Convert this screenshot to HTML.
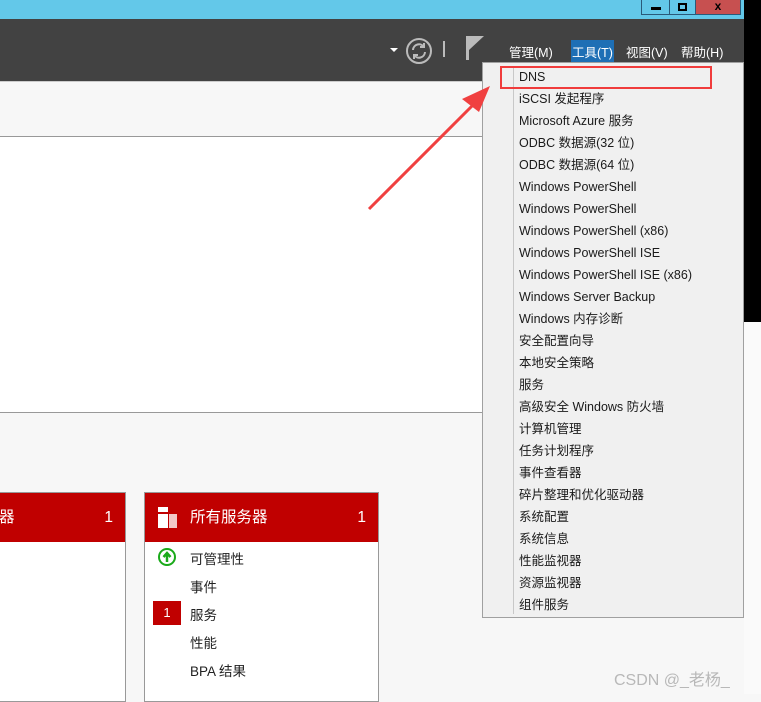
<!DOCTYPE html>
<html><head><meta charset="utf-8"><style>
*{margin:0;padding:0;box-sizing:border-box}
body{width:761px;height:694px;overflow:hidden;position:relative;background:#f7f7f7;font-family:"Liberation Sans","Noto Sans CJK SC",sans-serif;}
.abs{position:absolute}
.menu .it{height:22px;line-height:22px;font-size:12.5px;color:#1a1a1a;padding-left:36px;white-space:nowrap}
.menu .sep{position:absolute;left:30px;top:3px;width:1px;height:548px;background:#c8c8c8;padding:0}
.top span{position:absolute;color:#fff;font-size:12.5px}
.card{position:absolute;top:492px;height:210px;background:#fff;border:1px solid #999}
.hdr{height:49px;background:#c00000;color:#fff;font-size:15.5px;line-height:49px;position:relative}
.row{position:absolute;left:45px;font-size:13.5px;color:#222}
</style></head><body>
<div class="abs" style="left:0;top:0;width:761px;height:19px;background:#63c8e9"></div>
<div class="abs" style="left:744px;top:0;width:17px;height:322px;background:#000"></div>
<div class="abs" style="left:641px;top:0;width:29px;height:15px;border:1px solid #2a5a7a;border-top:none;background:#63c8e9"><div class="abs" style="left:9px;top:7px;width:10px;height:3px;background:#000"></div></div>
<div class="abs" style="left:669px;top:0;width:27px;height:15px;border:1px solid #2a5a7a;border-top:none;background:#63c8e9"><div class="abs" style="left:8px;top:3px;width:9px;height:8px;border:2px solid #000"></div></div>
<div class="abs" style="left:695px;top:0;width:46px;height:15px;background:#c75050;border:1px solid #2a5a7a;border-top:none;color:#000;font-weight:bold;font-size:12px;text-align:center;line-height:12px">x</div>
<div class="abs top" style="left:0;top:19px;width:744px;height:62px;background:#424242">
<div class="abs" style="left:390px;top:29px;width:0;height:0;border-left:4px solid transparent;border-right:4px solid transparent;border-top:4px solid #fff"></div>
<svg class="abs" style="left:405px;top:18px" width="28" height="28" viewBox="0 0 28 28"><circle cx="14" cy="14" r="12" fill="none" stroke="#bbb" stroke-width="2"/><path d="M8 13a6 6 0 0 1 11-3M20 15a6 6 0 0 1-11 3" fill="none" stroke="#bbb" stroke-width="2"/><path d="M19 6v4h-4M9 22v-4h4" fill="none" stroke="#bbb" stroke-width="2"/></svg>
<div class="abs" style="left:443px;top:22px;width:2px;height:16px;background:#bbb"></div>
<div class="abs" style="left:466px;top:17px;width:3px;height:24px;background:#bbb"></div>
<svg class="abs" style="left:469px;top:17px" width="16" height="16"><path d="M0 0H15L0 14Z" fill="#bbb"/></svg>
<span style="left:509px;top:23px">管理(M)</span>
<span style="left:571px;top:21px;background:#1e6fb5;padding:2px 1px">工具(T)</span>
<span style="left:626px;top:23px">视图(V)</span>
<span style="left:681px;top:23px">帮助(H)</span>
</div>
<div class="abs" style="left:0;top:81px;width:744px;height:1px;background:#ccc"></div>
<div class="abs" style="left:0;top:136px;width:744px;height:277px;background:#fff;border-top:1px solid #999;border-bottom:1px solid #999"></div>
<div class="abs" style="left:744px;top:322px;width:17px;height:372px;background:#fafafa"></div>
<div class="card" style="left:-2px;width:128px"><div class="hdr"><span style="position:absolute;left:0">器</span><span style="position:absolute;right:12px">1</span></div></div>
<div class="card" style="left:144px;width:235px"><div class="hdr"><svg class="abs" style="left:13px;top:14px" width="20" height="21"><rect x="0" y="0" width="10" height="5" fill="#fff"/><rect x="0" y="7" width="10" height="14" fill="#fff"/><rect x="11" y="7" width="8" height="14" fill="#f2c8c8"/></svg><span style="position:absolute;left:45px">所有服务器</span><span style="position:absolute;right:12px">1</span></div>
<svg class="abs" style="left:12px;top:54px" width="20" height="20"><circle cx="10" cy="10" r="8" fill="none" stroke="#1aaa1a" stroke-width="2"/><path d="M10 15V7M6.5 10L10 6L13.5 10" fill="none" stroke="#1aaa1a" stroke-width="2.5"/></svg>
<div class="row" style="top:55px">可管理性</div>
<div class="row" style="top:83px">事件</div>
<div class="abs" style="left:8px;top:108px;width:28px;height:24px;background:#c00000;color:#fff;font-size:13px;text-align:center;line-height:24px">1</div>
<div class="row" style="top:111px">服务</div>
<div class="row" style="top:139px">性能</div>
<div class="row" style="top:167px">BPA 结果</div>
</div>
<div class="abs menu" style="left:482px;top:62px;width:262px;height:556px;background:#f0f0f0;border:1px solid #a0a0a0;padding-top:3px">
<div class="sep"></div>
<div class="it">DNS</div><div class="it">iSCSI 发起程序</div><div class="it">Microsoft Azure 服务</div><div class="it">ODBC 数据源(32 位)</div><div class="it">ODBC 数据源(64 位)</div><div class="it">Windows PowerShell</div><div class="it">Windows PowerShell</div><div class="it">Windows PowerShell (x86)</div><div class="it">Windows PowerShell ISE</div><div class="it">Windows PowerShell ISE (x86)</div><div class="it">Windows Server Backup</div><div class="it">Windows 内存诊断</div><div class="it">安全配置向导</div><div class="it">本地安全策略</div><div class="it">服务</div><div class="it">高级安全 Windows 防火墙</div><div class="it">计算机管理</div><div class="it">任务计划程序</div><div class="it">事件查看器</div><div class="it">碎片整理和优化驱动器</div><div class="it">系统配置</div><div class="it">系统信息</div><div class="it">性能监视器</div><div class="it">资源监视器</div><div class="it">组件服务</div>
</div>
<div class="abs" style="left:500px;top:66px;width:212px;height:23px;border:2px solid #f03c3c"></div>
<svg class="abs" style="left:0;top:0" width="761" height="694"><path d="M369 209L474 104" stroke="#f04040" stroke-width="3"/><path d="M490 86L462 99L479 112Z" fill="#f04040"/></svg>
<div class="abs" style="left:614px;top:666px;font-size:16px;color:#b8b8b8">CSDN @_老杨_</div>
</body></html>
